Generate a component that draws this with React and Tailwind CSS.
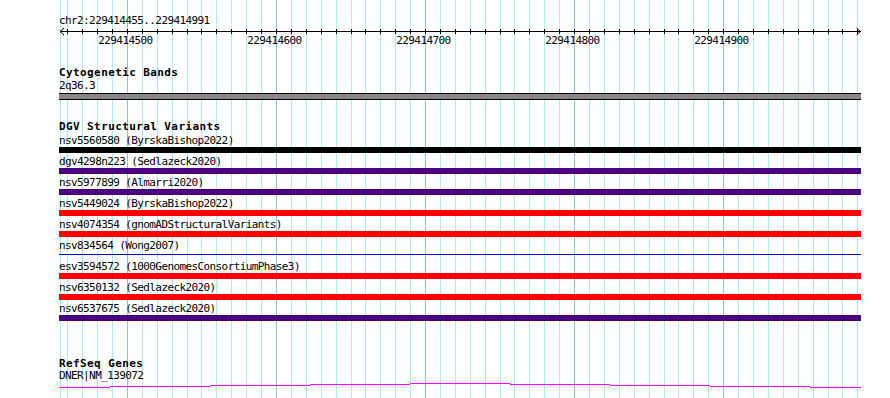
import React from "react";

// 10bp guide lines, 229414460 .. 229414990
const GRID = Array.from({ length: 54 }, (_, k) => ({
  x: Math.round(67.3 + k * 14.906),
  major: (k - 4) % 10 === 0,
}));

const LABELS = [
  { k: 4, text: "229414500" },
  { k: 14, text: "229414600" },
  { k: 24, text: "229414700" },
  { k: 34, text: "229414800" },
  { k: 44, text: "229414900" },
];

const RED = "bg-[#ff0000]";
const PURPLE = "bg-[#4b0082]";

const variants = [
  { name: "nsv5560580 (ByrskaBishop2022)", bar: "bg-black" },
  { name: "dgv4298n223 (Sedlazeck2020)", bar: PURPLE },
  { name: "nsv5977899 (Almarri2020)", bar: PURPLE },
  { name: "nsv5449024 (ByrskaBishop2022)", bar: RED },
  { name: "nsv4074354 (gnomADStructuralVariants)", bar: RED },
  { name: "nsv834564 (Wong2007)", thin: true },
  { name: "esv3594572 (1000GenomesConsortiumPhase3)", bar: RED },
  { name: "nsv6350132 (Sedlazeck2020)", bar: RED },
  { name: "nsv6537675 (Sedlazeck2020)", bar: PURPLE },
];

// stepped gene line (x from track start, y within svg)
const GENE_STEPS = [
  [0, 51, 6],
  [51, 151, 5],
  [151, 251, 4],
  [251, 351, 3],
  [351, 451, 2],
  [451, 551, 3],
  [551, 651, 4],
  [651, 751, 5],
  [751, 802, 6],
];

function GuideLines() {
  return (
    <svg className="absolute left-0 top-0" width="890" height="398">
      <rect x="60" y="0" width="1" height="398" fill="#aaeeee" />
      {GRID.map((g) => (
        <rect key={g.x} x={g.x} y="0" width="1" height="398" fill={g.major ? "#88c4e4" : "#aaeeee"} />
      ))}
    </svg>
  );
}

function Ruler() {
  // coordinates local to the track column (starts at x=59)
  return (
    <svg width="802" height="20" className="block font-['DejaVu_Sans_Mono'] text-[11px] tracking-[-0.6px]">
      <rect x="1" y="5" width="801" height="1" fill="#000" />
      <polyline points="5,2 1,5.5 5,9" fill="none" stroke="#000" strokeWidth="1" />
      <polyline points="797.5,2 801.5,5.5 797.5,9" fill="none" stroke="#000" strokeWidth="1" />
      {GRID.map((g) => (
        <rect key={g.x} x={g.x - 59} y="3" width="1" height="5" fill="#000" />
      ))}
      {LABELS.map((l) => (
        <text key={l.k} x={GRID[l.k].x - 60.5 + 27} y="17.6" textAnchor="end" fill="#000">
          {l.text}
        </text>
      ))}
    </svg>
  );
}

function VariantRow({ v }) {
  return (
    <div className="h-[21px] flex flex-col">
      <div className="h-[10px] leading-[10px] whitespace-nowrap">{v.name}</div>
      {v.thin ? (
        <div className="mt-[1px] h-[6px] pt-[2px]">
          <div className="h-px bg-[#0000ff]" />
        </div>
      ) : (
        <div className={`mt-[1px] h-[6px] ${v.bar}`} />
      )}
    </div>
  );
}

export default function App() {
  return (
    <div className="relative w-[890px] h-[398px] overflow-hidden bg-white text-black font-['DejaVu_Sans_Mono',monospace] text-[11px] tracking-[-0.6px]">
      <GuideLines />

      <div className="relative ml-[59px] w-[802px] pt-[16px] flex flex-col">
        <div className="h-[10px] leading-[10px]">chr2:229414455..229414991</div>
        <Ruler />

        <div className="mt-[22px] h-[10px] leading-[10px] font-bold tracking-[0.4px]">Cytogenetic Bands</div>
        <div className="mt-[3px] h-[10px] leading-[10px]">2q36.3</div>
        <div className="mt-[2px] h-[7px] bg-[#888888] border-y border-black" />

        <div className="mt-[22px] h-[10px] leading-[10px] font-bold tracking-[0.4px]">DGV Structural Variants</div>
        <div className="mt-[4px] flex flex-col">
          {variants.map((v) => (
            <VariantRow key={v.name} v={v} />
          ))}
        </div>

        <div className="mt-[34px] h-[10px] leading-[10px] font-bold tracking-[0.4px]">RefSeq Genes</div>
        <div className="mt-[2px] h-[10px] leading-[10px]">DNER|NM_139072</div>
        <svg width="802" height="9" className="block">
          {GENE_STEPS.map(([a, b, y]) => (
            <rect key={a} x={a} y={y} width={b - a} height="1" fill="#ff00ff" />
          ))}
        </svg>
      </div>
    </div>
  );
}
